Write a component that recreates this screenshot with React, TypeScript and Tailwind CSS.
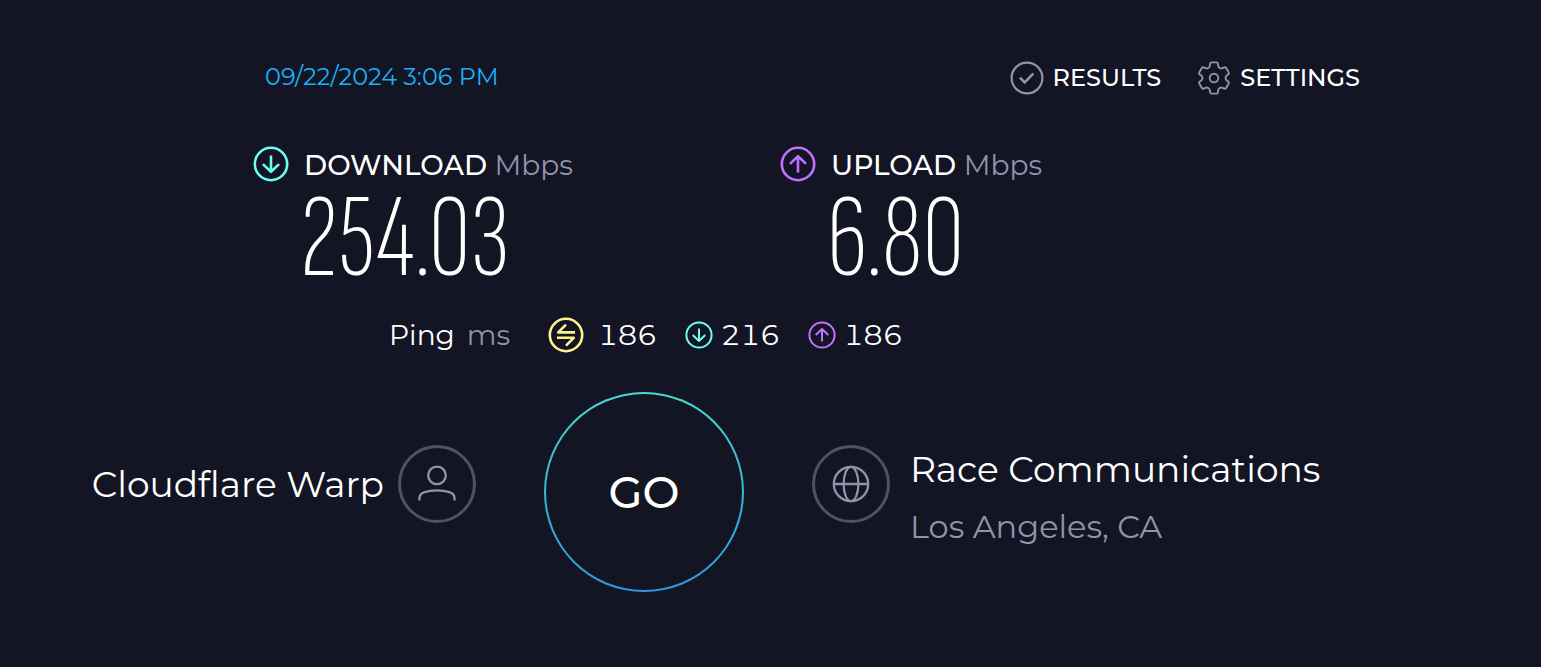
import type { ReactNode } from "react";

type IconProps = { className?: string };

function ArrowCircle({ up = false, className = "" }: IconProps & { up?: boolean }) {
  return (
    <svg viewBox="0 0 36 36" fill="none" stroke="currentColor" strokeWidth="2.6" strokeLinejoin="round" className={className} aria-hidden="true">
      <circle cx="18" cy="18" r="16.2" />
      {up ? (
        <path d="M18 26.5V10.2M9.9 17.9L18 10.2l8.1 7.7" />
      ) : (
        <path d="M18 9.5v16.3M9.900 18.100L18 25.800l8.100-7.700" />
      )}
    </svg>
  );
}

function PingIcon({ className = "" }: IconProps) {
  return (
    <svg viewBox="0 0 36 36" fill="none" stroke="currentColor" strokeWidth="2.6" strokeLinejoin="round" className={className} aria-hidden="true">
      <circle cx="18" cy="18" r="16.2" />
      <path d="M27 15.400H10.200L18 7.600M9 20.800h16.800L18 28.600" />
    </svg>
  );
}

function CheckCircle({ className = "" }: IconProps) {
  return (
    <svg viewBox="0 0 34 34" fill="none" stroke="currentColor" strokeWidth="2.2" className={className} aria-hidden="true">
      <circle cx="17" cy="17" r="15.4" />
      <path d="M10.600 17.400l4.100 4.100 8-8.400" strokeWidth="2.6" strokeLinecap="round" />
    </svg>
  );
}

function Gear({ className = "" }: IconProps) {
  return (
    <svg viewBox="0 0 34 34" fill="none" stroke="currentColor" strokeWidth="1.9" strokeLinejoin="round" className={className} aria-hidden="true">
      <path d="M14.600 1.400h4.800c1 0 1.400.6 1.500 1.400l.3 2c.3 2 2.400 3.100 4.200 2.400l1.800-.7c.9-.4 1.600-.1 2.100.7l2.300 4c.5.8.4 1.600-.4 2.200l-1.500 1.200c-1.600 1.200-1.600 3.600 0 4.800l1.500 1.200c.8.6.9 1.400.4 2.200l-2.300 4c-.5.8-1.200 1.100-2.100.7l-1.800-.7c-1.800-.7-3.900.4-4.200 2.400l-.3 2c-.1.8-.5 1.400-1.500 1.400h-4.800c-1 0-1.400-.6-1.500-1.400l-.3-2c-.3-2-2.400-3.100-4.200-2.400l-1.800.7c-.9.4-1.600.1-2.100-.7l-2.300-4c-.5-.8-.4-1.600.4-2.200l1.500-1.200c1.600-1.200 1.600-3.600 0-4.800l-1.500-1.200c-.8-.6-.9-1.400-.4-2.200l2.300-4c.5-.8 1.200-1.100 2.100-.7l1.800.7c1.800.7 3.900-.4 4.200-2.400l.3-2c.1-.8.5-1.400 1.500-1.400z" />
      <circle cx="17" cy="17" r="4.3" />
    </svg>
  );
}

function Person({ className = "" }: IconProps) {
  return (
    <svg viewBox="0 0 38 38" fill="none" stroke="currentColor" strokeWidth="2.3" className={className} aria-hidden="true">
      <circle cx="19" cy="10.4" r="8.8" />
      <path d="M1.400 35.500v-1.800c0-3.600 2-5.600 5.200-6.600C10 26 14.600 25.400 19 25.400s9 .6 12.400 1.700c3.200 1 5.200 3 5.200 6.600v1.800" />
    </svg>
  );
}

function Globe({ className = "" }: IconProps) {
  return (
    <svg viewBox="0 0 38 38" fill="none" stroke="currentColor" strokeWidth="2.3" className={className} aria-hidden="true">
      <circle cx="19" cy="19" r="17.2" />
      <ellipse cx="19" cy="19" rx="7.4" ry="17.2" />
      <path d="M1.800 19h34.400" />
    </svg>
  );
}

function NavLink({ icon, children }: { icon: ReactNode; children: ReactNode }) {
  return (
    <a href="#" className="flex items-center gap-[9px] text-2xl font-medium text-white">
      {icon}
      {children}
    </a>
  );
}

function Speed({ label, value, icon }: { label: string; value: string; icon: ReactNode }) {
  return (
    <section className="flex items-start gap-[15px]">
      {icon}
      <div>
        <h2 className="text-[28px] leading-[38px] font-medium text-white">
          {label} <span className="font-normal text-[#9193a8]">Mbps</span>
        </h2>
        <p className="-ml-1 font-['Sofia_Sans_Extra_Condensed','Roboto_Condensed',sans-serif] text-[118px] leading-[112px] font-extralight text-white">
          {value}
        </p>
      </div>
    </section>
  );
}

function Latency({ icon, value, className = "" }: { icon: ReactNode; value: string; className?: string }) {
  return (
    <li className={`flex items-center text-white tabular-nums ${className}`}>
      {icon}
      {value}
    </li>
  );
}

function RoundBadge({ children }: { children: ReactNode }) {
  return (
    <span className="flex size-[78px] shrink-0 items-center justify-center rounded-full border-[3px] border-[#51525f] text-[#9193a8]">
      {children}
    </span>
  );
}

export default function App() {
  return (
    <main className="flex min-h-screen flex-col bg-[#131424] pt-[61px] pb-[75px] font-['Montserrat',Inter,sans-serif]">
      <header className="flex items-start justify-between pr-[181px] pl-[265px]">
        <time dateTime="2024-09-22T15:06" className="text-2xl text-[#1cb0f6]">
          09/22/2024 3:06 PM
        </time>
        <nav className="flex items-center gap-9">
          <NavLink icon={<CheckCircle className="size-[34px] text-[#9193a8]" />}>RESULTS</NavLink>
          <NavLink icon={<Gear className="size-[34px] text-[#9193a8]" />}>SETTINGS</NavLink>
        </nav>
      </header>

      <div className="mt-[51px] grid grid-cols-[527px_1fr] pl-[253px]">
        <Speed label="DOWNLOAD" value="254.03" icon={<ArrowCircle className="size-9 text-[#6afff3]" />} />
        <Speed label="UPLOAD" value="6.80" icon={<ArrowCircle up className="size-9 text-[#bf71ff]" />} />
      </div>

      <section className="mt-[21px] flex h-9 items-center pl-[389px] text-[28px] leading-9">
        <h2 className="text-white">Ping</h2>
        <span className="ml-3 text-[#9193a8]">ms</span>
        <ul className="ml-[38px] flex items-center gap-7">
          <Latency className="gap-3.5" value="186" icon={<PingIcon className="size-9 text-[#fff38e]" />} />
          <Latency className="gap-2" value="216" icon={<ArrowCircle className="size-7 text-[#6afff3]" />} />
          <Latency className="gap-2" value="186" icon={<ArrowCircle up className="size-7 text-[#bf71ff]" />} />
        </ul>
      </section>

      <div className="mt-[39px] grid grid-cols-[476px_200px_1fr] gap-x-[68px]">
        <section className="flex h-[184px] items-center justify-end gap-3.5 text-4xl text-white">
          <h2>Cloudflare Warp</h2>
          <RoundBadge>
            <Person className="size-[38px]" />
          </RoundBadge>
        </section>

        <button
          type="button"
          className="size-[200px] rounded-full bg-linear-to-b from-[#48d8cf] to-[#3097da] p-0.5 text-[44px] font-medium text-white"
        >
          <span className="flex size-full items-center justify-center rounded-full bg-[#131522]">GO</span>
        </button>

        <section className="flex h-[184px] items-center gap-5">
          <RoundBadge>
            <Globe className="size-[38px]" />
          </RoundBadge>
          <div className="pt-7">
            <h2 className="text-4xl leading-[58px] text-white">Race Communications</h2>
            <p className="text-[32px] leading-[58px] text-[#9193a8]">Los Angeles, CA</p>
          </div>
        </section>
      </div>
    </main>
  );
}
